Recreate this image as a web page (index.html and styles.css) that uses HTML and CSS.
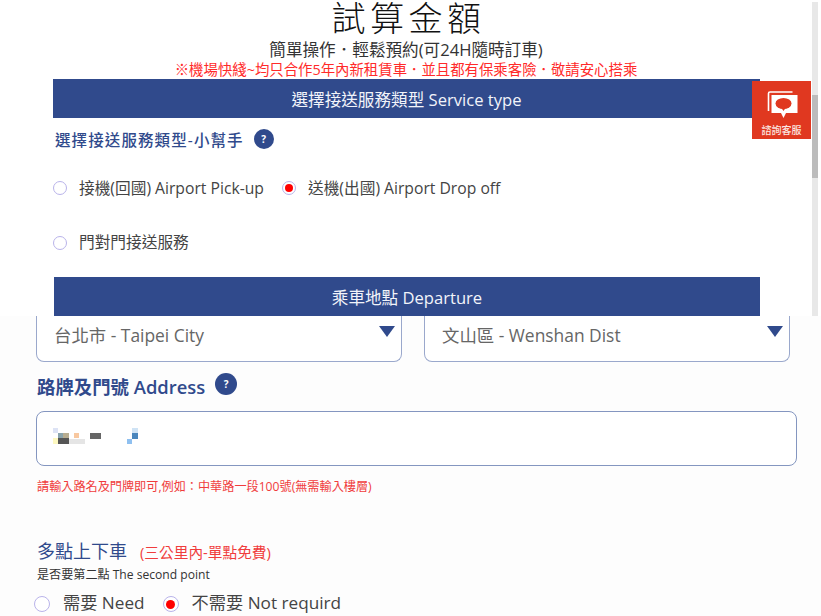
FILE: index.html
```html
<!DOCTYPE html>
<html lang="zh-Hant">
<head>
    <meta charset="UTF-8">
    <meta name="viewport" content="width=device-width, initial-scale=1.0">
    <title>試算金額</title>
    <link rel="stylesheet" href="styles.css">
</head>
<body>
<div class="top-panel">
    <div class="panel-content">
        <h1 class="title">試算金額</h1>
        <p class="subtitle">簡單操作．輕鬆預約(可24H隨時訂車)</p>
        <p class="notice">※機場快綫~均只合作5年內新租賃車．並且都有保乘客險．敬請安心搭乘</p>
        <div class="bar">選擇接送服務類型 Service type</div>
        <div class="helper">
            <span>選擇接送服務類型-小幫手</span>
            <span class="help-dot">?</span>
        </div>
        <div class="radio-row">
            <label class="radio-item radio-first"><span class="radio"></span>接機(回國) Airport Pick-up</label>
            <label class="radio-item"><span class="radio checked"></span>送機(出國) Airport Drop off</label>
        </div>
        <div class="radio-row radio-row-door">
            <label class="radio-item"><span class="radio"></span>門對門接送服務</label>
        </div>
        <div class="bar bar-second">乘車地點 Departure</div>
    </div>
    <div class="scrollbar"><div class="scroll-thumb"></div></div>
    <a class="chat-badge">
        <svg width="32" height="30" viewBox="0 0 32 30">
            <path d="M2.5 21V3.5C2.5 2.5 3 2 4 2H26.5" fill="none" stroke="#fff" stroke-width="1.6"/>
            <path d="M5.5 5H31.5V23H20L17.5 28L15 23H5.5Z" fill="#fff"/>
            <ellipse cx="17.5" cy="13.5" rx="8" ry="5.5" fill="#e03820"/>
            <path d="M15 17.5L17.5 21L20 17.5Z" fill="#e03820"/>
        </svg>
        <span>諮詢客服</span>
    </a>
</div>

<div class="lower">
    <div class="select-row">
        <div class="select">台北市 - Taipei City<span class="arrow"></span></div>
        <div class="select">文山區 - Wenshan Dist<span class="arrow"></span></div>
    </div>
    <div class="field-label">
        <span>路牌及門號 Address</span>
        <span class="help-dot help-dot-big">?</span>
    </div>
    <div class="address-input">
        <svg class="mosaic" width="90" height="20" viewBox="0 0 90 20">
            <rect x="1" y="1" width="5" height="5" fill="#dde3f5"/>
            <rect x="6" y="6" width="5" height="5" fill="#8aa4ac"/>
            <rect x="11" y="6" width="6" height="5" fill="#b8ad90"/>
            <rect x="22" y="6" width="5" height="5" fill="#f8c8a0"/>
            <rect x="1" y="11" width="5" height="6" fill="#fdf8c0"/>
            <rect x="6" y="11" width="11" height="6" fill="#555"/>
            <rect x="17" y="12" width="16" height="5" fill="#e5e5e5"/>
            <rect x="38" y="6" width="11" height="6" fill="#666"/>
            <rect x="80" y="1" width="6" height="5" fill="#cfe3f5"/>
            <rect x="80" y="6" width="6" height="6" fill="#4a86bd"/>
            <rect x="75" y="12" width="5" height="5" fill="#8fc0f0"/>
        </svg>
    </div>
    <p class="hint">請輸入路名及門牌即可,例如：中華路一段100號(無需輸入樓層)</p>
    <div class="multi-title">多點上下車<span class="multi-note">(三公里內-單點免費)</span></div>
    <p class="multi-sub">是否要第二點 The second point</p>
    <div class="multi-radios">
        <label class="radio-item"><span class="radio radio-big"></span>需要 Need</label>
        <label class="radio-item"><span class="radio radio-big checked"></span>不需要 Not requird</label>
    </div>
</div>
</body>
</html>
```

FILE: styles.css
```css
html, body {
    height: 616px;
    overflow: hidden;
}
body {
    margin: 0;
    background-color: #fdfdfd;
    color: #444;
    font-family: "Open Sans", "Noto Sans CJK TC", sans-serif;
}
p {
    margin: 0;
}
.top-panel {
    position: relative;
    display: flex;
    height: 316px;
    background-color: white;
    overflow: hidden;
}
.panel-content {
    width: 812px;
    flex-shrink: 0;
}
.title {
    margin: 0;
    padding-left: 5px;
    height: 37px;
    line-height: 36px;
    font-size: 34px;
    font-weight: 300;
    letter-spacing: 4.5px;
    text-align: center;
    color: #111;
}
.subtitle {
    height: 22px;
    line-height: 26px;
    font-size: 16.6px;
    text-align: center;
    color: #333;
}
.notice {
    height: 20px;
    line-height: 22px;
    font-size: 14.4px;
    text-align: center;
    color: #ff2a2a;
}
.bar {
    width: 707px;
    height: 39px;
    margin-left: 53px;
    line-height: 41px;
    background-color: #304a8c;
    color: #f2f4fa;
    font-size: 16.6px;
    text-align: center;
}
.bar-second {
    width: 706px;
    margin: 23px 0 0 54px;
}
.helper {
    display: flex;
    align-items: center;
    gap: 10px;
    height: 20px;
    margin: 11px 0 0 55px;
    font-size: 15.5px;
    font-weight: 500;
    letter-spacing: 1.1px;
    color: #304a8c;
}
.help-dot {
    display: flex;
    align-items: center;
    justify-content: center;
    width: 20px;
    height: 20px;
    border-radius: 50%;
    background-color: #304a8c;
    color: white;
    font-size: 10px;
    font-weight: 700;
    letter-spacing: 0;
}
.radio-row {
    display: flex;
    height: 24px;
    margin: 26px 0 0 53px;
}
.radio-row-door {
    margin-top: 30px;
    margin-bottom: 24px;
}
.radio-row-door + .bar-second {
    margin-top: 0;
}
.radio-item {
    display: flex;
    align-items: center;
    font-size: 15.7px;
    color: #444;
}
.radio-first {
    width: 229px;
}
.radio {
    box-sizing: border-box;
    display: flex;
    align-items: center;
    justify-content: center;
    width: 14px;
    height: 14px;
    margin-right: 12px;
    margin-top: 2px;
    border: 1px solid #b9b3ea;
    border-radius: 50%;
    background-color: white;
}
.radio-row-door .radio {
    margin-top: 4px;
}
.radio.checked::after {
    content: "";
    width: 8px;
    height: 8px;
    border-radius: 50%;
    background-color: #f00;
}
.scrollbar {
    width: 6px;
    height: 314px;
    margin-top: 2px;
    background-color: #e8e8e8;
    padding-top: 93px;
    box-sizing: border-box;
}
.scroll-thumb {
    height: 83px;
    background-color: #bcbcbc;
}
.chat-badge {
    position: absolute;
    top: 81px;
    left: 752px;
    display: flex;
    flex-direction: column;
    align-items: center;
    width: 59px;
    height: 58px;
    background-color: #e03820;
    color: #fbe6e0;
    font-size: 10px;
    font-weight: 500;
}
.chat-badge svg {
    margin: 9px 0 2px;
}
.lower {
    padding-left: 36px;
}
.select-row {
    display: flex;
    gap: 22px;
}
.select {
    position: relative;
    box-sizing: border-box;
    width: 366px;
    height: 46px;
    padding: 6px 0 0 17px;
    border: 1px solid #9aa8cc;
    border-top: none;
    border-radius: 0 0 8px 8px;
    background-color: white;
    font-size: 17.4px;
    color: #666;
}
.arrow {
    position: absolute;
    top: 10px;
    right: 6px;
    width: 0;
    height: 0;
    border-left: 8px solid transparent;
    border-right: 8px solid transparent;
    border-top: 11px solid #304a8c;
}
.field-label {
    display: flex;
    align-items: center;
    gap: 10px;
    height: 24px;
    margin: 12px 0 0 1px;
    font-size: 18.4px;
    font-weight: 600;
    color: #304a8c;
}
.help-dot-big {
    width: 22px;
    height: 22px;
    margin-top: -4px;
}
.address-input {
    box-sizing: border-box;
    width: 761px;
    height: 55px;
    margin-top: 13px;
    padding: 15px 0 0 15px;
    border: 1px solid #8496c0;
    border-radius: 8px;
    background-color: white;
}
.mosaic {
    display: block;
    filter: blur(0.5px);
}
.hint {
    height: 18px;
    margin: 12px 0 0 1px;
    line-height: 18px;
    font-size: 12.15px;
    color: #f03c3c;
}
.multi-title {
    height: 26px;
    margin: 42px 0 0 1px;
    line-height: 26px;
    font-size: 18px;
    color: #304a8c;
}
.multi-note {
    margin-left: 13px;
    font-size: 14.7px;
    color: #f03c3c;
}
.multi-sub {
    height: 17px;
    margin: 2px 0 0 1px;
    line-height: 17px;
    font-size: 12.1px;
    color: #333;
}
.multi-radios {
    display: flex;
    gap: 20px;
    margin-top: 6px;
}
.multi-radios .radio-item {
    font-size: 17.2px;
}
.radio-big {
    width: 16px;
    height: 16px;
    margin: 5px 13px 0 -2px;
}
.radio-big.checked::after {
    width: 9px;
    height: 9px;
}
```
